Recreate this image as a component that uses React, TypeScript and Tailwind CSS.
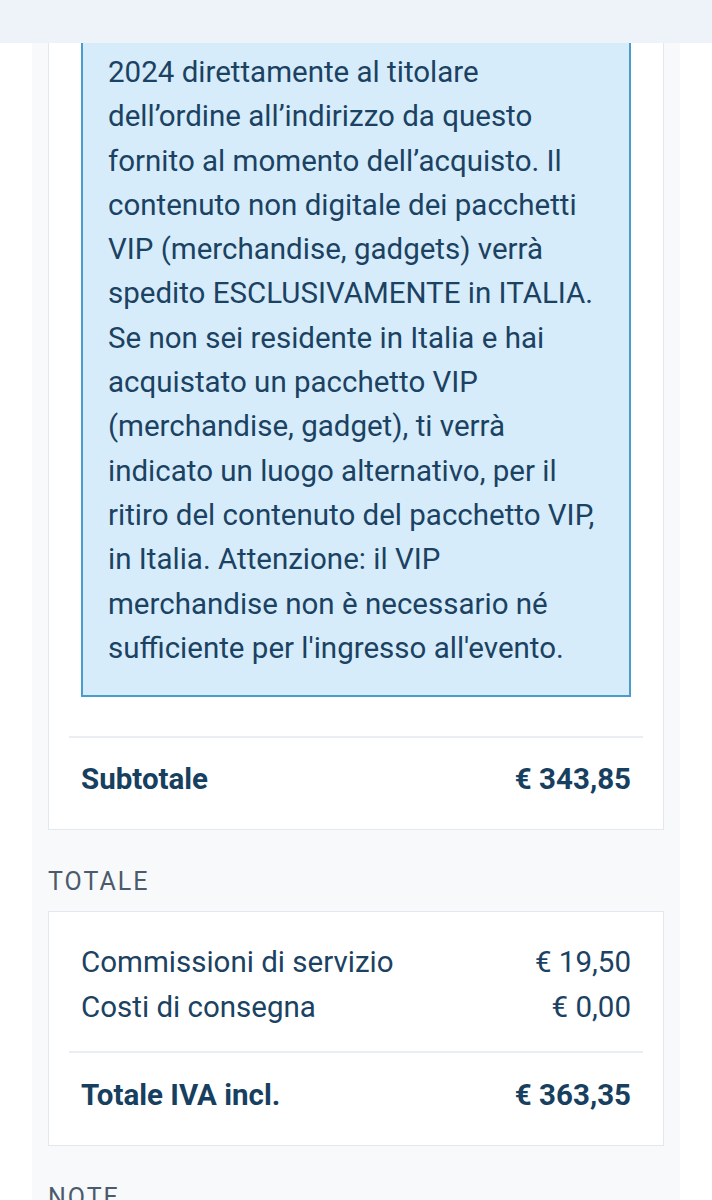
import React from "react";

const lines = [
  "2024 direttamente al titolare",
  "dell’ordine all’indirizzo da questo",
  "fornito al momento dell’acquisto. Il",
  "contenuto non digitale dei pacchetti",
  "VIP (merchandise, gadgets) verrà",
  "spedito ESCLUSIVAMENTE in ITALIA.",
  "Se non sei residente in Italia e hai",
  "acquistato un pacchetto VIP",
  "(merchandise, gadget), ti verrà",
  "indicato un luogo alternativo, per il",
  "ritiro del contenuto del pacchetto VIP,",
  "in Italia. Attenzione: il VIP",
  "merchandise non è necessario né",
  "sufficiente per l'ingresso all'evento.",
];

export default function App() {
  return (
    <div
      className="w-[712px] h-[1200px] overflow-hidden bg-white relative"
      style={{ fontFamily: "Roboto, 'Noto Sans', sans-serif" }}
    >
      <div className="h-[43px] bg-[#eef3f9]" />
      <div className="ml-[32px] w-[648px] h-[1157px] bg-[#f7f9fb] px-[16px]">
        {/* Card 1 */}
        <div className="bg-white border-x border-b border-[#e3e8ee] px-[20px]">
          <div className="mx-[12px] bg-[#d6ecfa] border-x-2 border-b-2 border-[#4a9ccd] pl-[25px] pr-[4px] pt-[7px] pb-[25px] text-[#1b4262] text-[29.5px] leading-[44.3px]">
            {lines.map((l, i) => (
              <div key={i} className="whitespace-nowrap">
                {l}
              </div>
            ))}
          </div>
          <div className="mt-[39px] h-[2px] bg-[#eaeef2]" />
          <div className="flex justify-between px-[12px] pt-[26px] pb-[35px] text-[29.5px] leading-[30px] font-bold text-[#173f5f]">
            <span>Subtotale</span>
            <span>€ 343,85</span>
          </div>
        </div>

        <div className="pt-[38px] pb-[15px] text-[25px] leading-[28px] tracking-[2px] text-[#4b5b6b]">
          TOTALE
        </div>

        {/* Card 2 */}
        <div className="bg-white border border-[#e3e8ee] px-[20px]">
          <div className="px-[12px] pt-[28px] pb-[21px] text-[29.5px] leading-[45px] text-[#1b4262]">
            <div className="flex justify-between">
              <span>Commissioni di servizio</span>
              <span>€ 19,50</span>
            </div>
            <div className="flex justify-between">
              <span>Costi di consegna</span>
              <span>€ 0,00</span>
            </div>
          </div>
          <div className="h-[2px] bg-[#eaeef2]" />
          <div className="flex justify-between px-[12px] pt-[27px] pb-[35px] text-[29.5px] leading-[30px] font-bold text-[#173f5f]">
            <span>Totale IVA incl.</span>
            <span>€ 363,35</span>
          </div>
        </div>

        <div className="pt-[38px] text-[25px] leading-[28px] tracking-[2px] text-[#4b5b6b]">
          NOTE
        </div>
      </div>
    </div>
  );
}
